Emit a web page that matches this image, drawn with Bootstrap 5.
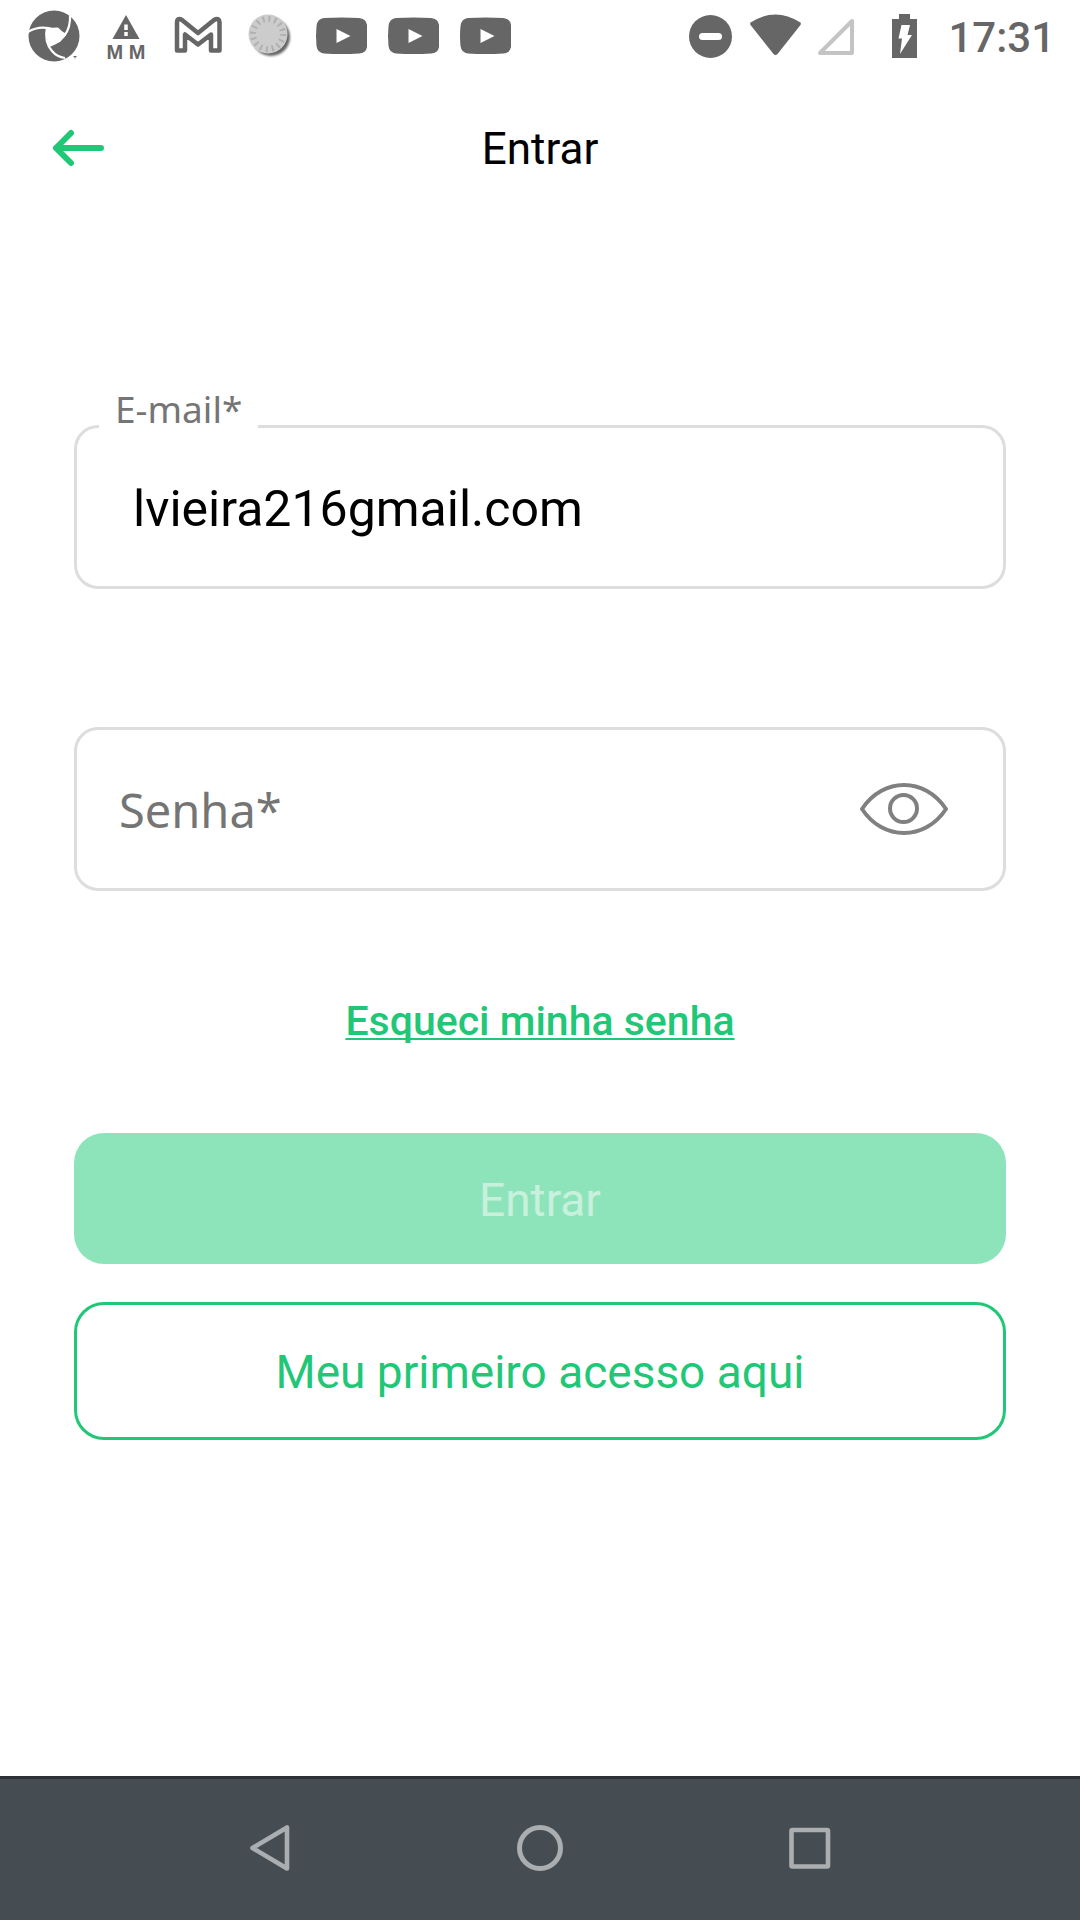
<!DOCTYPE html>
<html lang="pt-BR">
<head>
<meta charset="utf-8">
<meta name="viewport" content="width=device-width, initial-scale=1">
<title>Entrar</title>
<link href="https://cdn.jsdelivr.net/npm/bootstrap@5.3.0/dist/css/bootstrap.min.css" rel="stylesheet">
<style>
  :root { --brand: #1fc777; --line: #dddddd; --hint: #757575; --status: #666666; }
  body { font-family: Roboto, "Liberation Sans", sans-serif; background: #fff; color: #000; }
  svg { display: block; flex: none; }
  .status-bar { height: 72px; padding: 0 25px 0 18px; color: var(--status); }
  .clock { font-size: 42px; line-height: 72px; font-weight: 500; padding-top: 3px; }
  .app-header { height: 152px; padding: 0 48px; }
  .app-header h1 { font-size: 44px; line-height: 52px; font-weight: 400; padding-top: 2px; }
  .icon-btn { display: block; border: 0; padding: 0; background: none; color: var(--brand); }
  .login-form { padding: 201px 74px 0; }
  .outlined { border: 3px solid var(--line); border-radius: 24px; height: 164px; }
  .outlined input { font-size: 50px; line-height: 60px; border: 0; background: none; color: #000; padding: 4px 56px 0; height: 100%; }
  .outlined input:focus { box-shadow: none; background: none; }
  .outlined label { font-family: "Noto Sans", sans-serif; color: var(--hint); }
  .float-label { top: -43px; left: 22px; padding: 0 16px; background: #fff; font-size: 37px; line-height: 48px; }
  .rest-label { top: 48px; left: 42px; font-size: 47px; line-height: 64px; pointer-events: none; }
  .eye-btn { color: #808080; margin-right: 55px; }
  .field-gap { margin-top: 138px; }
  .forgot { margin-top: 106px; font-size: 41px; line-height: 48px; font-weight: 500; color: var(--brand); text-decoration: underline; text-decoration-thickness: 2px; text-underline-offset: 3px; text-decoration-skip-ink: none; }
  .forgot:hover { color: var(--brand); }
  .wide-btn { font-size: 46px; line-height: 60px; border-radius: 30px; border: 3px solid var(--brand); padding: 37px 24px 35px; }
  .wide-btn.enter, .wide-btn.enter:disabled { margin-top: 88px; border: 0; background: #8ee4ba; color: #c8f1dd; opacity: 1; padding-bottom: 34px; }
  .wide-btn.first-access { margin-top: 38px; color: var(--brand); background: #fff; }
  .system-nav { height: 144px; background: #454d52; border-top: 3px solid #2b3135; color: #abaeb1; padding: 0 12.5% 3px; }
  .system-nav .icon-btn { color: inherit; }
</style>
</head>
<body class="d-flex flex-column min-vh-100">

<div class="status-bar d-flex align-items-center">
  <svg width="72" height="72" viewBox="18 0 72 72" aria-hidden="true">
    <circle cx="54" cy="36" r="25.500" fill="currentColor"/>
    <path d="M47 28 L58 27.500 L66 35 L60 42 L49 46 L46.500 36Z" fill="#fff"/>
    <g fill="none" stroke="#fff" stroke-width="2.200">
      <path d="M28 32 Q44 22 66 35"/>
      <path d="M70 13 Q71 28 64 36 Q58 43 49 46"/>
      <path d="M47 27 Q44 42 52 51 Q57 57 65 58"/>
    </g>
    <path d="M73.500 56.500h3M75 56.500v2" stroke="currentColor" stroke-width="1"/>
  </svg>
  <svg width="72" height="72" viewBox="90 0 72 72" aria-hidden="true">
    <path d="M126 15 L139.500 39 H112.500Z" fill="currentColor"/>
    <path d="M126 24.500v5.500M126 32v4" stroke="#fff" stroke-width="3.500"/>
    <text x="126" y="59" text-anchor="middle" font-family="Liberation Sans, sans-serif" font-weight="700" font-size="20" fill="currentColor">M M</text>
  </svg>
  <svg width="72" height="72" viewBox="162 0 72 72" aria-hidden="true">
    <path d="M177 50.500 V23 Q177 17 182 20 L198 33 L214 20 Q219.500 17 219.500 23 V50.500 H211 V34.500 L198 44.500 L185 34.500 V50.500Z" fill="none" stroke="currentColor" stroke-width="4.500" stroke-linejoin="round"/>
  </svg>
  <svg width="72" height="72" viewBox="234 0 72 72" aria-hidden="true">
    <defs><filter id="soft"><feGaussianBlur stdDeviation="1"/></filter></defs>
    <circle cx="271" cy="37" r="19" fill="#666" filter="url(#soft)"/>
    <circle cx="268" cy="34" r="19.500" fill="#ccc"/>
    <circle cx="268" cy="34" r="15" fill="none" stroke="#b0b0b0" stroke-width="6" stroke-dasharray="2 3.890"/>
  </svg>
  <svg width="72" height="72" viewBox="306 0 72 72" aria-hidden="true"><path id="tube" d="M324 18 Q342 17 359 18 Q366 18.500 367 25 V47 Q366 53 359 53.500 Q342 54.500 324 53.500 Q317.500 53 316.500 46 Q315.500 36 316.500 26 Q317.500 18.500 324 18Z M336.500 29 V43 L350.500 36Z" fill="currentColor" fill-rule="evenodd"/></svg>
  <svg width="72" height="72" viewBox="306 0 72 72" aria-hidden="true"><use href="#tube"/></svg>
  <svg width="72" height="72" viewBox="306 0 72 72" aria-hidden="true"><use href="#tube"/></svg>

  <svg class="ms-auto" width="65" height="72" viewBox="678 0 65 72" aria-hidden="true">
    <circle cx="710.500" cy="36.500" r="21.500" fill="currentColor"/><path d="M702.500 36.500h16" stroke="#fff" stroke-width="7" stroke-linecap="round"/>
  </svg>
  <svg width="65" height="72" viewBox="743 0 65 72" aria-hidden="true">
    <path d="M750.500 25 Q749.500 23 751 22.300 Q775.500 6.500 800 22.300 Q801.500 23 800.500 25 L777.500 54 Q775.500 56 773.500 54Z" fill="currentColor"/>
  </svg>
  <svg width="65" height="72" viewBox="808 0 65 72" aria-hidden="true">
    <path d="M852 21 V53 H820Z" fill="none" stroke="#c4c4c4" stroke-width="4" stroke-linejoin="round"/>
  </svg>
  <svg width="75" height="72" viewBox="873 0 75 72" aria-hidden="true">
    <path d="M899 14h11v5h7v39h-25V19h7Z" fill="currentColor"/><path d="M901.500 25h8.500l-2.500 10h4.500l-12 19 2-15.500h-3.500Z" fill="#fff"/>
  </svg>
  <span class="clock">17:31</span>
</div>

<header class="app-header row g-0 align-items-center">
  <div class="col">
    <button type="button" class="icon-btn" aria-label="Voltar">
      <svg width="60" height="48" viewBox="48 124 60 48" aria-hidden="true"><path d="M101 148H56M71 133L56 148L71 163" fill="none" stroke="currentColor" stroke-width="6" stroke-linecap="round" stroke-linejoin="round"/></svg>
    </button>
  </div>
  <h1 class="col-auto m-0">Entrar</h1>
  <div class="col"></div>
</header>

<main>
  <form class="login-form d-flex flex-column">
    <div class="outlined position-relative">
      <label class="float-label position-absolute" for="email">E-mail*</label>
      <input class="form-control" type="text" inputmode="email" id="email" value="lvieira216gmail.com" spellcheck="false">
    </div>
    <div class="outlined field-gap position-relative d-flex align-items-center">
      <label class="rest-label position-absolute" for="senha">Senha*</label>
      <input class="form-control" type="password" id="senha">
      <button type="button" class="icon-btn eye-btn" aria-label="Mostrar senha">
        <svg width="88" height="54" viewBox="860 782 88 54" aria-hidden="true"><g fill="none" stroke="currentColor" stroke-width="4"><path d="M862 809 C883 777 925 777 946 809 C925 841 883 841 862 809Z" stroke-linejoin="round"/><circle cx="903.500" cy="808.500" r="13.500"/></g></svg>
      </button>
    </div>
    <a class="forgot align-self-center" href="#">Esqueci minha senha</a>
    <button type="submit" class="btn wide-btn enter" disabled>Entrar</button>
    <button type="button" class="btn wide-btn first-access">Meu primeiro acesso aqui</button>
  </form>
</main>

<nav class="system-nav d-flex align-items-center mt-auto" aria-label="Sistema">
  <button type="button" class="icon-btn flex-fill d-flex justify-content-center" aria-label="Voltar">
    <svg width="54" height="54" viewBox="243 1821 54 54" aria-hidden="true"><path d="M287 1827.500V1868.500L252.500 1848Z" fill="none" stroke="currentColor" stroke-width="4.600" stroke-linejoin="round"/></svg>
  </button>
  <button type="button" class="icon-btn flex-fill d-flex justify-content-center" aria-label="Início">
    <svg width="54" height="54" viewBox="513 1821 54 54" aria-hidden="true"><circle cx="540" cy="1848" r="20.500" fill="none" stroke="currentColor" stroke-width="5"/></svg>
  </button>
  <button type="button" class="icon-btn flex-fill d-flex justify-content-center" aria-label="Recentes">
    <svg width="54" height="54" viewBox="783 1821 54 54" aria-hidden="true"><rect x="791.500" y="1830" width="36.500" height="36.500" rx="1" fill="none" stroke="currentColor" stroke-width="4.600" stroke-linejoin="round"/></svg>
  </button>
</nav>
<script src="https://cdn.jsdelivr.net/npm/bootstrap@5.3.0/dist/js/bootstrap.bundle.min.js"></script>
</body>
</html>
